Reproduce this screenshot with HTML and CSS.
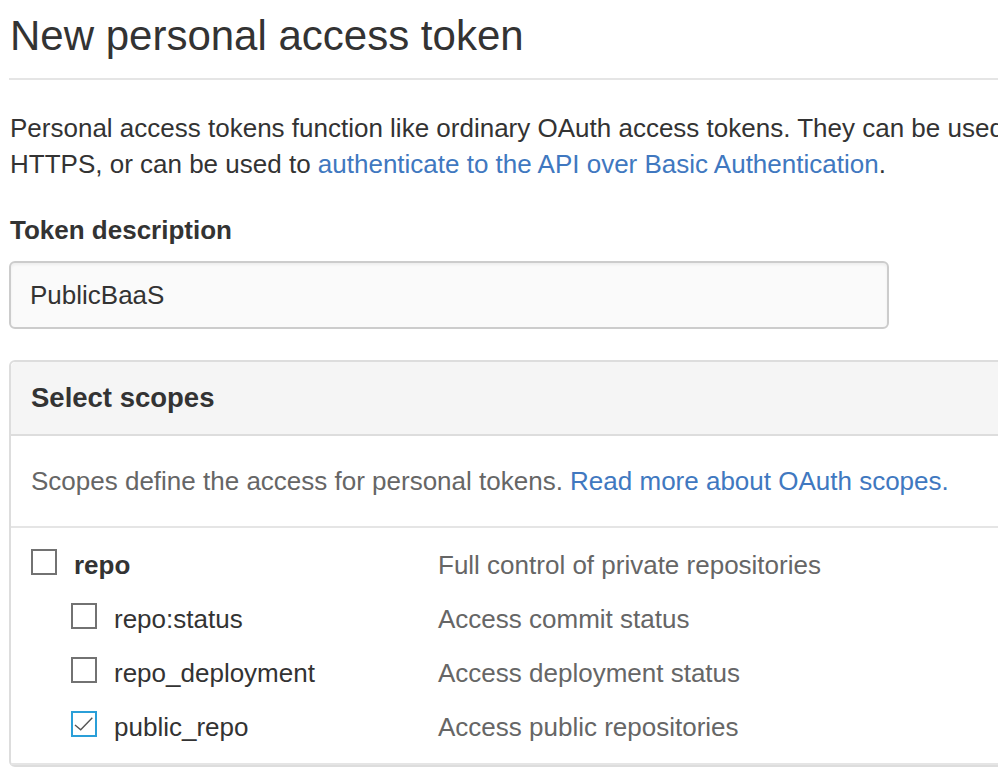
FILE: index.html
```html
<!DOCTYPE html>
<html>
<head>
<meta charset="utf-8">
<link rel="stylesheet" href="styles.css">
</head>
<body>
<div class="page">
  <div class="subhead">
    <h2 class="subhead-title">New personal access token</h2>
  </div>
  <p class="intro">Personal access tokens function like ordinary OAuth access tokens. They can be used instead of a password for Git over HTTPS, or can be used to <a href="#" class="link">authenticate to the API over Basic Authentication</a>.</p>
  <div class="form-group">
    <label class="form-label">Token description</label>
    <div class="form-control">PublicBaaS</div>
  </div>
  <div class="box">
    <div class="box-header">
      <h3 class="box-title">Select scopes</h3>
    </div>
    <div class="box-desc">Scopes define the access for personal tokens. <a href="#" class="link">Read more about OAuth scopes.</a></div>
    <div class="scopes">
      <div class="scope-row">
        <div class="scope-name"><span class="checkbox"></span><span class="name-bold">repo</span></div>
        <div class="scope-desc">Full control of private repositories</div>
      </div>
      <div class="scope-row">
        <div class="scope-name sub"><span class="checkbox"></span><span>repo:status</span></div>
        <div class="scope-desc">Access commit status</div>
      </div>
      <div class="scope-row">
        <div class="scope-name sub"><span class="checkbox"></span><span>repo_deployment</span></div>
        <div class="scope-desc">Access deployment status</div>
      </div>
      <div class="scope-row">
        <div class="scope-name sub"><span class="checkbox checked"><svg viewBox="0 0 26 26" width="26" height="26"><path d="M4 14 L9.7 18.7 L21.3 6.7" fill="none" stroke="#555" stroke-width="1.4"/></svg></span><span>public_repo</span></div>
        <div class="scope-desc">Access public repositories</div>
      </div>
    </div>
  </div>
</div>
</body>
</html>
```

FILE: styles.css
```css
html, body {
  margin: 0;
  padding: 0;
  overflow: hidden;
  background: #fff;
}

body {
  font-family: "Liberation Sans", Arial, sans-serif;
  color: #333;
  width: 998px;
  height: 767px;
}

.page {
  width: 1440px;
  padding-left: 9px;
}

.subhead {
  padding: 10px 0 16px;
  border-bottom: 2px solid #e5e5e5;
}

.subhead-title {
  margin: 0;
  font-size: 42px;
  line-height: 52px;
  font-weight: normal;
  padding-left: 1px;
}

.intro {
  margin: 30px 0 0;
  width: 1420px;
  font-size: 26px;
  line-height: 36px;
  padding-left: 1px;
}

.link {
  color: #4078c0;
  text-decoration: none;
}

.form-group {
  margin-top: 30px;
}

.form-label {
  display: block;
  font-size: 26px;
  line-height: 36px;
  font-weight: bold;
  padding-left: 1px;
}

.form-control {
  margin-top: 13px;
  height: 64px;
  box-sizing: content-box;
  border: 2px solid #ccc;
  border-radius: 6px;
  background: #fafafa;
  box-shadow: inset 0 2px 3px rgba(0,0,0,0.05);
  font-size: 26px;
  line-height: 64px;
  padding: 0 0 0 19px;
  width: 857px;
}

.box {
  margin-top: 31px;
  width: 1200px;
  border: 2px solid #ddd;
  border-radius: 6px 0 0 6px;
}

.box-header {
  background: #f5f5f5;
  border-bottom: 2px solid #ddd;
  border-radius: 5px 0 0 0;
  height: 72px;
  display: flex;
  align-items: center;
  padding-left: 20px;
}

.box-title {
  margin: 0;
  font-size: 27.5px;
  line-height: 36px;
  font-weight: bold;
}

.box-desc {
  padding: 27px 20px;
  font-size: 26px;
  line-height: 36px;
  color: #666;
  border-bottom: 2px solid #e5e5e5;
}

.scopes {
  padding: 10px 0 9px 20px;
  border-bottom: 2px solid #e5e5e5;
}

.scope-row {
  display: flex;
  height: 54px;
  align-items: center;
  font-size: 26px;
}

.scope-name {
  width: 407px;
  display: flex;
  align-items: center;
  gap: 17px;
}

.scope-name.sub {
  padding-left: 40px;
  width: 367px;
}

.name-bold {
  font-weight: bold;
}

.checkbox {
  display: block;
  width: 22px;
  height: 22px;
  border: 2px solid #727272;
  background: #fff;
  position: relative;
  top: -3px;
  flex: none;
}

.checkbox.checked {
  border-color: #2a9fd8;
}

.checkbox svg {
  display: block;
  margin: -2px 0 0 -2px;
}

.scope-desc {
  color: #666;
}
```
